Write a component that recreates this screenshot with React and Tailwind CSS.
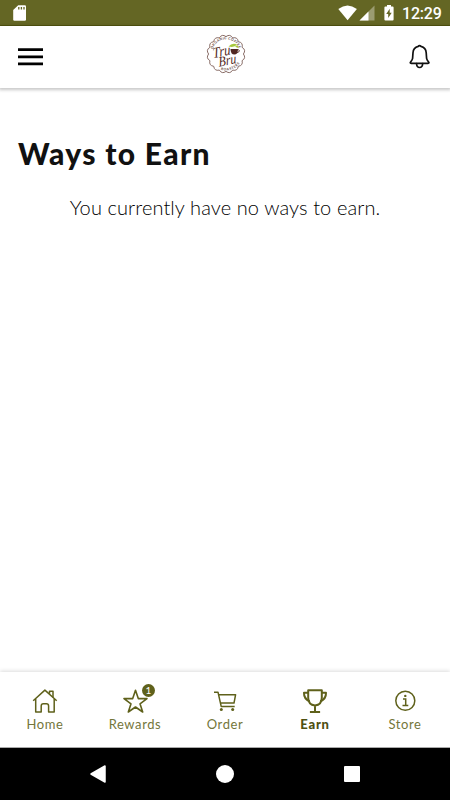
import React from 'react'

const StatusBar = () => (
  <div className="h-[26px] shrink-0 bg-[#646624] border-b border-[#52540f] flex items-center justify-between pl-[13px] pr-[9px]">
    <svg width="14" height="18" viewBox="0 0 14 18">
      <path d="M5.2 1.2h6.6q1.2 0 1.2 1.2v13.2q0 1.200-1.200 1.200H1.400q-1.200 0-1.200-1.200V6z" fill="#fff" />
      <path d="M5.800 3v2.600M8.400 3v2.600M11 3v2.600" stroke="#646624" strokeWidth="1.300" />
    </svg>
    <div className="flex items-center">
      <svg width="56" height="18" viewBox="0 0 56 18">
        <path d="M0.300 5Q9.500-2.200 18.900 5L9.600 16.300z" fill="#fff" />
        <path d="M36.500 1.500v15h-15z" fill="#9b9c71" />
        <path d="M30.500 7.500v9h-9z" fill="#fff" />
        <path d="M49 1h4v1.400h1.600q1 0 1 1v12.200q0 1-1 1h-7.200q-1 0-1-1V3.400q0-1 1-1H49z" fill="#fff" />
        <path d="M51.700 4.700l-3.500 5.300h2v4l3.500-5.300h-2z" fill="#646624" />
      </svg>
      <span className="mt-[3px] ml-[8px] w-[39px] text-[16px] leading-none font-medium text-white font-[Roboto,sans-serif] tracking-[-0.2px] whitespace-nowrap">12:29</span>
    </div>
  </div>
)

// Sixteen shallow scallops around the badge
const scallops = Array.from({ length: 16 }, (_, i) => {
  const a = (i * Math.PI) / 8
  const b = ((i + 0.5) * Math.PI) / 8
  const c = ((i + 1) * Math.PI) / 8
  const p = (r, t) => `${(20 + r * Math.cos(t)).toFixed(2)} ${(20 + r * Math.sin(t)).toFixed(2)}`
  return `${i === 0 ? `M${p(17.4, a)}` : ''}Q${p(20.8, b)} ${p(17.4, c)}`
}).join('')

const Logo = () => (
  <svg width="40" height="40" viewBox="0 0 40 40">
    <defs>
      <path id="ringTop" d="M6.300 19A13.700 13.700 0 0 1 33.700 19" />
      <path id="ringBottom" d="M14 35.300A16.300 16.300 0 0 0 35.500 25.500" />
    </defs>
    <path d={scallops} fill="#fff" stroke="#7a5b55" strokeWidth="0.900" />
    <text className="font-[Lato,sans-serif] font-bold" fontSize="3.400" fill="#5b3a35">
      <textPath href="#ringTop" startOffset="4" textLength="34">ORGANIC COFFEE</textPath>
    </text>
    <text className="font-[Lato,sans-serif] font-bold" fontSize="3.400" fill="#5b3a35">
      <textPath href="#ringBottom" startOffset="1" textLength="21">ROASTERS</textPath>
    </text>
    <path d="M22.500 12.500q3.500-4 8.500-2q-2.500 3.500-8.500 2z" fill="#a7c83d" />
    <path d="M29 12q3-1.500 3.500 1.200q-1.500 1.500-3.500-1.200z" fill="#a7c83d" />
    <path d="M24.500 15h7.500q0 5.500-3.700 5.500T24.500 15z" fill="#512722" />
    <path d="M31.500 15.700q2.800 0 1.300 2.200l-2 1" fill="none" stroke="#512722" strokeWidth="0.900" />
    <g className="font-['Liberation_Serif',serif] italic font-normal" fill="#512722">
      <text x="7" y="22.500" fontSize="15" textLength="18" lengthAdjust="spacingAndGlyphs" transform="rotate(-12 15 20) skewX(-6) translate(2 0)">Tru</text>
      <text x="12.500" y="31" fontSize="14" textLength="18" lengthAdjust="spacingAndGlyphs" transform="rotate(-12 21 28) skewX(-6) translate(3 0)">Bru</text>
    </g>
  </svg>
)

const Header = () => (
  <header className="h-[62px] shrink-0 bg-white flex items-center justify-between pl-[18px] pr-[18px] shadow-[0_1px_3px_1px_rgba(0,0,0,0.22)]">
    <svg width="25" height="18" viewBox="0 0 25 18">
      <path d="M0 1.700h25M0 8.800h25M0 15.900h25" stroke="#000" strokeWidth="2.700" />
    </svg>
    <div className="pl-[1px] pb-[6px]">
      <Logo />
    </div>
    <svg width="24" height="26" viewBox="0 0 24 26" fill="none" stroke="#111" strokeWidth="1.700" strokeLinejoin="round" strokeLinecap="round">
      <path d="M10.200 2.400q1.200-1.700 2.800 0q4.900 1.200 5.200 6.300l.4 5.600q.3 1.500 1.800 3.400q1.300 1.600-.4 1.600H3.200q-1.700 0-.4-1.600q1.500-1.900 1.800-3.400L5 8.700q.3-5.100 5.200-6.300z" />
      <path d="M8.500 19.500q.3 4 3.100 4t3.100-4" />
    </svg>
  </header>
)

const HomeIcon = () => (
  <svg width="28" height="28" viewBox="0 0 28 28" fill="none" stroke="#5f611b" strokeWidth="1.500" strokeLinejoin="round">
    <path d="M2.200 14.800L13.900 4.100l11.800 10.700" />
    <path d="M4.700 13v13h5.500v-6q0-2.200 2.200-2.200h3q2.200 0 2.200 2.200v6h5.600v-13M18.500 7.800V5.300h3.500v6" />
  </svg>
)

const StarIcon = () => (
  <svg width="28" height="28" viewBox="0 0 28 28" fill="none" stroke="#5f611b" strokeWidth="1.600" strokeLinejoin="round">
    <path d="M14.500 4.300l2.800 8.300h8.700l-7 5.200 2.700 8.200-7.200-5-7.200 5L10 17.800l-7-5.200h8.700z" />
  </svg>
)

const CartIcon = () => (
  <svg width="28" height="28" viewBox="0 0 28 28" fill="none" stroke="#5f611b" strokeWidth="1.500" strokeLinejoin="round">
    <path d="M3 6.200h4l3.200 14.200h13.500M7.400 8.700H24.600l-1.600 8.400H9.500" />
    <circle cx="10.300" cy="23.500" r="1.500" fill="#5f611b" stroke="none" />
    <circle cx="21.700" cy="23.500" r="1.500" fill="#5f611b" stroke="none" />
  </svg>
)

const TrophyIcon = () => (
  <svg width="28" height="28" viewBox="0 0 28 28" fill="none" stroke="#5f611b" strokeWidth="2" strokeLinejoin="round">
    <path d="M7.200 4.300h13.600v7.500q0 7-6.800 7.800q-6.800-.8-6.800-7.800zM14 19.500v6M8.900 26h10.200" />
    <path d="M7 6.800H3q-.2 6.300 5.700 8.500M21 6.800h4q.2 6.300-5.700 8.500" />
  </svg>
)

const InfoIcon = () => (
  <svg width="28" height="28" viewBox="0 0 28 28" fill="none" stroke="#5f611b" strokeWidth="1.500">
    <circle cx="14.300" cy="14.800" r="9.500" />
    <path d="M12 13h2.700v6.400M11.500 19.500h5.800" />
    <circle cx="14.300" cy="9.900" r="1.200" fill="#5f611b" stroke="none" />
  </svg>
)

const TABS = [
  { label: 'Home',    Icon: HomeIcon },
  { label: 'Rewards', Icon: StarIcon, badge: 1 },
  { label: 'Order',   Icon: CartIcon },
  { label: 'Earn',    Icon: TrophyIcon, active: true },
  { label: 'Store',   Icon: InfoIcon },
]

const TabBar = () => (
  <nav className="h-[76px] shrink-0 bg-white border-b border-[#aaa] grid grid-cols-5 shadow-[0_-1px_4px_rgba(0,0,0,0.14)]">
    {TABS.map(({ label, Icon, badge, active }) => (
      <div key={label} className="flex flex-col items-center pt-[14px]">
        <div className="relative">
          <Icon />
          {badge && (
            <span className="absolute left-[21px] top-[-2px] size-[13px] rounded-full bg-[#5f611b] text-white text-[10px] leading-[13px] text-center">
              {badge}
            </span>
          )}
        </div>
        <span
          className={
            active
              ? 'text-[13px] leading-[20px] font-black tracking-[0.8px] text-[#4e5011]'
              : 'text-[13px] leading-[20px] tracking-[0.6px] text-[#74763a]'
          }
        >
          {label}
        </span>
      </div>
    ))}
  </nav>
)

const SystemNav = () => (
  <div className="h-[52px] shrink-0 bg-black flex items-center justify-between pl-[90px] pr-[90px]">
    <svg width="16" height="18" viewBox="0 0 16 18">
      <path d="M15 1v16L1 9z" fill="#fff" stroke="#fff" strokeWidth="1.500" strokeLinejoin="round" />
    </svg>
    <span className="size-[18px] rounded-full bg-white" />
    <span className="size-[16px] rounded-[1px] bg-white" />
  </div>
)

const App = () => (
  <div className="w-[450px] h-[800px] bg-white flex flex-col overflow-hidden font-[Lato,sans-serif]">
    <StatusBar />
    <Header />
    <main className="flex-1 pt-[45px]">
      <h1 className="pl-[18px] text-[30px] leading-[40px] font-black tracking-[1.3px] text-[#111]">Ways to Earn</h1>
      <p className="mt-[20px] text-center text-[20px] leading-[28px] font-light tracking-[0.1px] text-black">
        You currently have no ways to earn.
      </p>
    </main>
    <TabBar />
    <SystemNav />
  </div>
)

export default App
